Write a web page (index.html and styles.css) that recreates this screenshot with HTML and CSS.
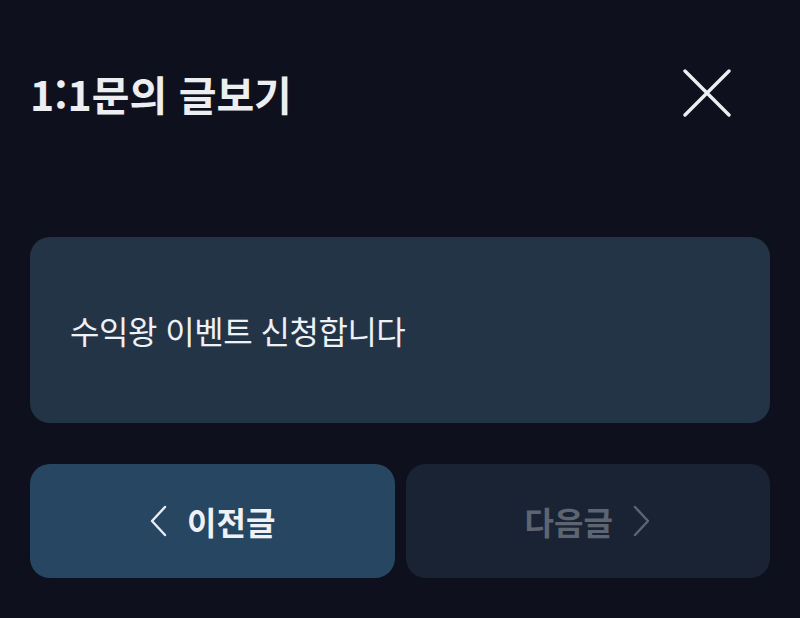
FILE: index.html
```html
<!DOCTYPE html>
<html lang="ko">
<head>
<meta charset="utf-8">
<link rel="stylesheet" href="styles.css">
</head>
<body>
<div class="page">
  <header class="header">
    <h1 class="title">1:1문의 글보기</h1>
    <button class="close" aria-label="닫기">
      <svg width="48" height="48" viewBox="0 0 48 48"><path d="M2 2 L46 46 M46 2 L2 46" stroke="#eceef2" stroke-width="3.4" stroke-linecap="round" fill="none"/></svg>
    </button>
  </header>
  <section class="card">
    <p class="subject">수익왕 이벤트 신청합니다</p>
  </section>
  <nav class="nav">
    <button class="btn prev">
      <svg class="chev" width="18" height="32" viewBox="0 0 18 32"><path d="M16 2 L3 16 L16 30" stroke="#e9edf3" stroke-width="2.4" fill="none" stroke-linecap="round" stroke-linejoin="round"/></svg>
      <span>이전글</span>
    </button>
    <button class="btn next">
      <span>다음글</span>
      <svg class="chev" width="18" height="32" viewBox="0 0 18 32"><path d="M2 2 L15 16 L2 30" stroke="#5d6573" stroke-width="2.4" fill="none" stroke-linecap="round" stroke-linejoin="round"/></svg>
    </button>
  </nav>
</div>
</body>
</html>
```
FILE: styles.css
```css
html, body {
  margin: 0;
  padding: 0;
  background: #0e111d;
}
body {
  width: 800px;
  height: 618px;
  overflow: hidden;
  font-family: "Noto Sans CJK KR", "Noto Sans", sans-serif;
}
.page {
  padding: 0 30px;
  display: flex;
  flex-direction: column;
}
.header {
  display: flex;
  justify-content: space-between;
  align-items: center;
  height: 60px;
  margin-top: 63px;
}
.title {
  margin: 0;
  color: #eceef2;
  font-size: 41px;
  font-weight: 700;
  letter-spacing: 0;
  line-height: 1;
}
.close {
  background: none;
  border: 0;
  padding: 0;
  margin-right: 39px;
  width: 48px;
  height: 48px;
  display: flex;
}
.card {
  margin-top: 114px;
  height: 186px;
  background: #243447;
  border-radius: 20px;
  display: flex;
  align-items: center;
  padding: 0 40px;
}
.subject {
  margin: 0;
  color: #eef1f5;
  font-size: 32px;
  font-weight: 400;
  letter-spacing: -0.5px;
}
.nav {
  margin-top: 41px;
  display: grid;
  grid-template-columns: 1fr 1fr;
  gap: 11px;
}
.btn {
  height: 114px;
  border: 0;
  border-radius: 20px;
  display: flex;
  align-items: center;
  justify-content: center;
  gap: 20px;
  font-family: inherit;
  font-size: 32px;
  font-weight: 700;
  letter-spacing: 0;
}
.prev {
  background: #264662;
  color: #eef1f5;
}
.next {
  background: #1a2333;
  color: #5d6573;
}
```
